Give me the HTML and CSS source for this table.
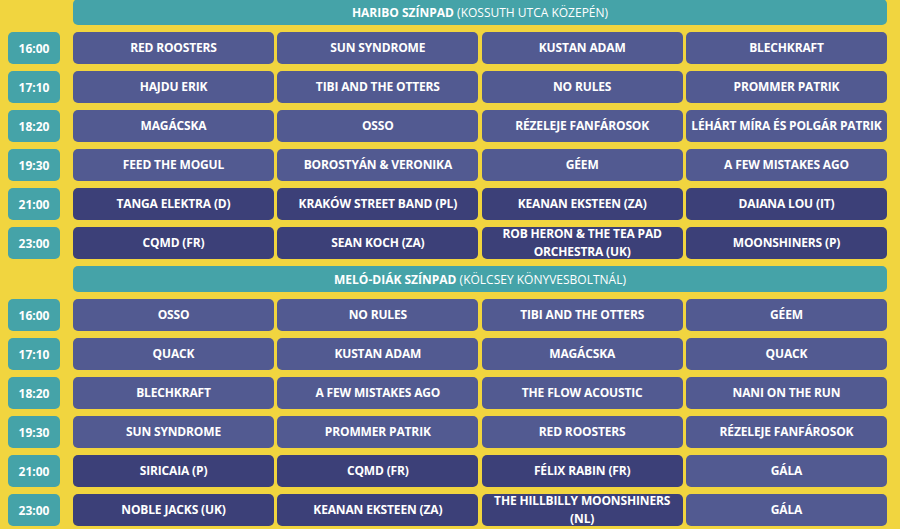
FILE: index.html
```html
<!DOCTYPE html>
<html lang="hu">
<head>
<meta charset="utf-8">
<title>Program</title>
<link rel="stylesheet" href="styles.css">
</head>
<body>
<main class="schedule">
  <section class="stage">
    <div class="stage-row">
      <div class="time-spacer"></div>
      <h2 class="stage-title"><strong>HARIBO SZÍNPAD</strong> (KOSSUTH UTCA KÖZEPÉN)</h2>
    </div>
    <div class="slot">
      <div class="time">16:00</div>
      <div class="acts">
        <div class="act">RED ROOSTERS</div>
        <div class="act">SUN SYNDROME</div>
        <div class="act">KUSTAN ADAM</div>
        <div class="act">BLECHKRAFT</div>
      </div>
    </div>
    <div class="slot">
      <div class="time">17:10</div>
      <div class="acts">
        <div class="act">HAJDU ERIK</div>
        <div class="act">TIBI AND THE OTTERS</div>
        <div class="act">NO RULES</div>
        <div class="act">PROMMER PATRIK</div>
      </div>
    </div>
    <div class="slot">
      <div class="time">18:20</div>
      <div class="acts">
        <div class="act">MAGÁCSKA</div>
        <div class="act">OSSO</div>
        <div class="act">RÉZELEJE FANFÁROSOK</div>
        <div class="act">LÉHÁRT MÍRA ÉS POLGÁR PATRIK</div>
      </div>
    </div>
    <div class="slot">
      <div class="time">19:30</div>
      <div class="acts">
        <div class="act">FEED THE MOGUL</div>
        <div class="act">BOROSTYÁN &amp; VERONIKA</div>
        <div class="act">GÉEM</div>
        <div class="act">A FEW MISTAKES AGO</div>
      </div>
    </div>
    <div class="slot">
      <div class="time">21:00</div>
      <div class="acts">
        <div class="act act-dark">TANGA ELEKTRA (D)</div>
        <div class="act act-dark">KRAKÓW STREET BAND (PL)</div>
        <div class="act act-dark">KEANAN EKSTEEN (ZA)</div>
        <div class="act act-dark">DAIANA LOU (IT)</div>
      </div>
    </div>
    <div class="slot">
      <div class="time">23:00</div>
      <div class="acts">
        <div class="act act-dark">CQMD (FR)</div>
        <div class="act act-dark">SEAN KOCH (ZA)</div>
        <div class="act act-dark">ROB HERON &amp; THE TEA PAD ORCHESTRA (UK)</div>
        <div class="act act-dark">MOONSHINERS (P)</div>
      </div>
    </div>
  </section>

  <section class="stage">
    <div class="stage-row">
      <div class="time-spacer"></div>
      <h2 class="stage-title"><strong>MELÓ-DIÁK SZÍNPAD</strong> (KÖLCSEY KÖNYVESBOLTNÁL)</h2>
    </div>
    <div class="slot">
      <div class="time">16:00</div>
      <div class="acts">
        <div class="act">OSSO</div>
        <div class="act">NO RULES</div>
        <div class="act">TIBI AND THE OTTERS</div>
        <div class="act">GÉEM</div>
      </div>
    </div>
    <div class="slot">
      <div class="time">17:10</div>
      <div class="acts">
        <div class="act">QUACK</div>
        <div class="act">KUSTAN ADAM</div>
        <div class="act">MAGÁCSKA</div>
        <div class="act">QUACK</div>
      </div>
    </div>
    <div class="slot">
      <div class="time">18:20</div>
      <div class="acts">
        <div class="act">BLECHKRAFT</div>
        <div class="act">A FEW MISTAKES AGO</div>
        <div class="act">THE FLOW ACOUSTIC</div>
        <div class="act">NANI ON THE RUN</div>
      </div>
    </div>
    <div class="slot">
      <div class="time">19:30</div>
      <div class="acts">
        <div class="act">SUN SYNDROME</div>
        <div class="act">PROMMER PATRIK</div>
        <div class="act">RED ROOSTERS</div>
        <div class="act">RÉZELEJE FANFÁROSOK</div>
      </div>
    </div>
    <div class="slot">
      <div class="time">21:00</div>
      <div class="acts">
        <div class="act act-dark">SIRICAIA (P)</div>
        <div class="act act-dark">CQMD (FR)</div>
        <div class="act act-dark">FÉLIX RABIN (FR)</div>
        <div class="act">GÁLA</div>
      </div>
    </div>
    <div class="slot">
      <div class="time">23:00</div>
      <div class="acts">
        <div class="act act-dark">NOBLE JACKS (UK)</div>
        <div class="act act-dark">KEANAN EKSTEEN (ZA)</div>
        <div class="act act-dark">THE HILLBILLY MOONSHINERS (NL)</div>
        <div class="act">GÁLA</div>
      </div>
    </div>
  </section>
</main>
</body>
</html>
```
FILE: styles.css
```css
html, body {
  margin: 0;
  padding: 0;
  background: #f1d53f;
  overflow: hidden;
}

body {
  font-family: "Open Sans", "Liberation Sans", sans-serif;
  color: #ffffff;
  font-size: 12px;
}

.schedule {
  display: flex;
  flex-direction: column;
  gap: 7px;
  padding: 0 13px 0 8px;
  margin-top: -1px;
}

.stage {
  display: flex;
  flex-direction: column;
  gap: 7px;
}

.stage-row,
.slot {
  display: flex;
  gap: 13px;
}

.time-spacer {
  width: 52px;
  flex: none;
}

.stage-title {
  flex: 1;
  margin: 0;
  height: 26px;
  display: flex;
  align-items: center;
  justify-content: center;
  background: #45a3a8;
  border-radius: 5px;
  font-size: 12px;
  font-weight: 400;
  white-space: pre;
}

.stage-title strong {
  font-weight: 700;
}

.time {
  width: 52px;
  flex: none;
  height: 32px;
  display: flex;
  align-items: center;
  justify-content: center;
  background: #45a3a8;
  border-radius: 5px;
  font-weight: 700;
}

.acts {
  flex: 1;
  display: grid;
  grid-template-columns: repeat(4, 1fr);
  column-gap: 3.34px;
}

.act {
  height: 32px;
  display: flex;
  align-items: center;
  justify-content: center;
  text-align: center;
  background: #525a91;
  border-radius: 5px;
  font-weight: 700;
  line-height: 18.5px;
  padding: 0;
  letter-spacing: -0.15px;
}

.act-dark {
  background: #3c4078;
}
```
